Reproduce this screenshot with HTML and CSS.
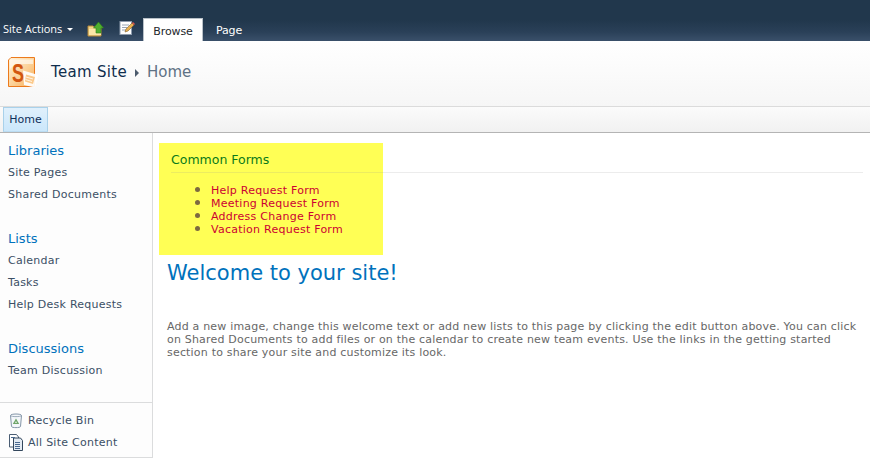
FILE: index.html
```html
<!DOCTYPE html>
<html lang="en">
<head>
<meta charset="utf-8">
<title>Team Site - Home</title>
<link rel="stylesheet" href="styles.css">
</head>
<body>
<header class="ribbon">
  <a class="site-actions">Site Actions <span class="caret"></span></a>
  <svg class="rb-icon folder" width="18" height="16" viewBox="0 0 18 16">
    <path d="M1 5h5l1 1h7v9H1z" fill="#f3d488" stroke="#b5893a" stroke-width="1"/>
    <path d="M2 8h12v6H2z" fill="#fbe6a8"/>
    <path d="M9 12V7H6.500L11.500 1 16.500 7H14v5z" fill="#4fae2e" stroke="#2f7f1b" stroke-width=".6"/>
  </svg>
  <svg class="rb-icon note" width="16" height="16" viewBox="0 0 16 16">
    <rect x="1" y="1.500" width="11.500" height="13" fill="#fff" stroke="#8d9bad"/>
    <path d="M3 5h7M3 7.500h5M3 10h4" stroke="#9aa6b5"/>
    <path d="M6 12l1-3 6-6 2 2-6 6z" fill="#e9b04f" stroke="#7d6231" stroke-width=".6"/>
    <path d="M13 3l1-1 2 2-1 1z" fill="#d9534f"/>
  </svg>
  <a class="tab active">Browse</a>
  <a class="tab">Page</a>
</header>
<section class="title-area">
  <svg class="logo" width="32" height="32" viewBox="0 0 32 32">
    <defs>
      <linearGradient id="lg" x1="0" y1="0" x2="1" y2="1">
        <stop offset="0" stop-color="#fff3dd"/>
        <stop offset=".45" stop-color="#fcd7a2"/>
        <stop offset="1" stop-color="#f8ae58"/>
      </linearGradient>
    </defs>
    <path d="M4 .5H27.500V29.500H1.500V3z" fill="url(#lg)" stroke="#ec7a1c"/>
    <path d="M3 2.500H26V7H8L3 12z" fill="#fffaf0" opacity=".7"/>
    <path d="M16 13.500l15.500 4.500-3.500 12.500-11-2.500z" fill="#fff" opacity=".92"/>
    <path d="M19 17.500l9 2.500-2 7-8-2.500z" fill="#fbc98a"/>
    <path d="M19 20l7 2M18.500 22.500l6.500 2" stroke="#fff" stroke-width=".8"/>
    <text x="5" y="25" textLength="12" lengthAdjust="spacingAndGlyphs" class="logo-s">S</text>
  </svg>
  <h1 class="crumb">Team Site <span class="arrow"></span><span class="crumb-page">Home</span></h1>
</section>
<nav class="topnav"><a class="topnav-item">Home</a></nav>
<div class="body">
  <aside class="quick">
    <div class="quick-main">
      <h3 class="q-head">Libraries</h3>
      <a class="q-link">Site Pages</a>
      <a class="q-link">Shared Documents</a>
      <h3 class="q-head spaced">Lists</h3>
      <a class="q-link">Calendar</a>
      <a class="q-link">Tasks</a>
      <a class="q-link">Help Desk Requests</a>
      <h3 class="q-head spaced">Discussions</h3>
      <a class="q-link">Team Discussion</a>
    </div>
    <div class="quick-foot">
      <a class="foot-link">
        <svg width="16" height="17" viewBox="0 0 16 17">
          <path d="M2.500 3.500c0-2 11-2 11 0l-1 11c-.2 1.500-8.800 1.500-9 0z" fill="#f4f7fa" stroke="#8496a8"/>
          <path d="M2.500 3.500c1 1.500 10 1.500 11 0" fill="none" stroke="#8496a8" stroke-width=".8"/>
          <path d="M8 6.500l3.200 5.500H4.800z" fill="#6fa56a"/>
          <path d="M8 9l1 2H7z" fill="#e6f1e4"/>
        </svg>
        Recycle Bin
      </a>
      <a class="foot-link">
        <svg width="16" height="17" viewBox="0 0 16 17">
          <path d="M1.500 .5h7l2 2.500v10h-9z" fill="#fff" stroke="#4a5d73"/>
          <path d="M5.500 4h7l2 2.500v10h-9z" fill="#e4ebf3" stroke="#33475c"/>
          <path d="M3 3.500h4M7 8.500h5M7 10.500h5M7 12.500h5M7 14.500h5" stroke="#4a6a90"/>
        </svg>
        All Site Content
      </a>
    </div>
  </aside>
  <main class="content">
    <section class="webpart">
      <div class="hilite">
        <h2 class="wp-title">Common Forms</h2>
        <ul class="forms">
          <li><a>Help Request Form</a></li>
          <li><a>Meeting Request Form</a></li>
          <li><a>Address Change Form</a></li>
          <li><a>Vacation Request Form</a></li>
        </ul>
      </div>
    </section>
    <h1 class="welcome">Welcome to your site!</h1>
    <p class="intro">Add a new image, change this welcome text or add new lists to this page by clicking the edit button above. You can click on Shared Documents to add files or on the calendar to create new team events. Use the links in the getting started section to share your site and customize its look.</p>
  </main>
</div>
</body>
</html>
```
FILE: styles.css
```css
* { box-sizing: border-box; }
html, body { margin: 0; padding: 0; height: 100%; overflow: hidden; }
body {
  background: #fff;
  font-family: "DejaVu Sans", Verdana, sans-serif;
  font-size: 11px;
  color: #676767;
}
.ribbon {
  height: 41px;
  display: flex;
  align-items: flex-end;
  background: linear-gradient(#21374c 0, #21374c 20px, #2a4058 32px, #3a506a 41px);
  color: #fff;
}
.site-actions {
  font-family: "Open Sans", "Noto Sans", sans-serif;
  font-size: 11px;
  margin-left: 3px;
  height: 23px;
  line-height: 23px;
  color: #fff;
  width: 84px;
  margin-bottom: 1px;
}
.caret {
  display: inline-block;
  border: 3px solid transparent;
  border-top-color: #fff;
  border-bottom-width: 0;
  margin-left: 2px;
  vertical-align: 2px;
}
.rb-icon { margin-bottom: 4px; }
.folder { margin-right: 14px; }
.note { margin-right: 8px; margin-bottom: 5px; }
.tab {
  width: 60px;
  height: 24px;
  text-align: center;
  line-height: 27px;
  font-size: 11px;
  letter-spacing: -.1px;
  color: #fff;
}
.tab.active {
  height: 23px;
  background: #fff;
  border: 1px solid #b9c1c8;
  border-bottom: 0;
  color: #23272c;
  line-height: 25px;
}
.tab + .tab { width: 52px; }
.title-area {
  height: 66px;
  display: flex;
  align-items: center;
  background: linear-gradient(#fff, #f6f6f6);
  border-bottom: 1px solid #dbdbdb;
  padding: 0 0 3px 7px;
}
.logo { margin-right: 12px; margin-top: 1px; }
.logo-s {
  font-family: "Liberation Sans", sans-serif;
  font-weight: bold;
  font-size: 25px;
  fill: #d2560f;
}
.crumb {
  margin: 0;
  font-size: 15px;
  font-weight: normal;
  letter-spacing: .3px;
  color: #0f2e4d;
  display: flex;
  align-items: center;
  white-space: pre;
}
.arrow {
  display: inline-block;
  border: 4px solid transparent;
  border-left: 4px solid #4c5b6d;
  border-right-width: 0;
  margin: 2px 8px 0 3px;
}
.crumb-page { color: #5f7285; letter-spacing: 0; }
.topnav {
  height: 26px;
  background: linear-gradient(#fbfbfb, #f1f1f1);
  border-bottom: 1px solid #b4b4b4;
  display: flex;
  padding-left: 3px;
}
.topnav-item {
  width: 45px;
  height: 25px;
  background: linear-gradient(#e0f0fc, #cbe7fb);
  border: 1px solid #a9d1ea;
  border-bottom-color: #bbdcf2;
  color: #10305a;
  text-align: center;
  line-height: 23px;
}
.body { display: flex; align-items: flex-start; }
.quick {
  width: 153px;
  height: 325px;
  background: #fdfdfd;
  border-right: 1px solid #dbdcdd;
  border-bottom: 1px solid #dbdcdd;
  display: flex;
  flex-direction: column;
  padding-top: 10px;
  flex: none;
}
.quick-main { flex: 1; display: flex; flex-direction: column; }
.q-head {
  margin: 0;
  padding-left: 8px;
  font-size: 13px;
  font-weight: normal;
  line-height: 16px;
  height: 19px;
  color: #0072bc;
}
.q-head.spaced { margin-top: 25px; }
.q-link {
  padding-left: 8px;
  height: 22px;
  line-height: 22px;
  letter-spacing: .25px;
  color: #3b4f65;
}
.quick-foot {
  border-top: 1px solid #dbdcdd;
  padding: 6px 0 4px 8px;
}
.foot-link {
  display: flex;
  align-items: center;
  gap: 4px;
  height: 22px;
  letter-spacing: .25px;
  color: #3b4f65;
}
.foot-link svg { flex: none; }
.content { flex: 1; min-width: 0; padding: 10px 7px 0 6px; }
.webpart { height: 112px; }
.hilite {
  position: relative;
  width: 224px;
  height: 112px;
  background: #ffff55;
  padding: 9px 0 0 12px;
}
.wp-title {
  margin: 0;
  font-size: 12.5px;
  font-weight: normal;
  line-height: 16px;
  color: #0a7a1a;
  height: 21px;
  width: 692px;
  padding-bottom: 5px;
  border-bottom: 1px solid rgba(150, 150, 150, .18);
}
.forms {
  margin: 10px 0 0 0;
  padding: 0 0 0 40px;
  line-height: 13px;
  letter-spacing: .25px;
  color: #7d6a40;
}
.forms li { height: 13px; }
.forms li::marker { font-size: 15px; }
.forms a { color: #cc0033; }
.welcome {
  margin: 5px 0 0 8px;
  font-size: 21px;
  font-weight: normal;
  line-height: 26px;
  color: #0072bc;
}
.intro {
  margin: 34px 0 0 8px;
  line-height: 13px;
  letter-spacing: .19px;
  width: 692px;
  color: #676767;
}
```
